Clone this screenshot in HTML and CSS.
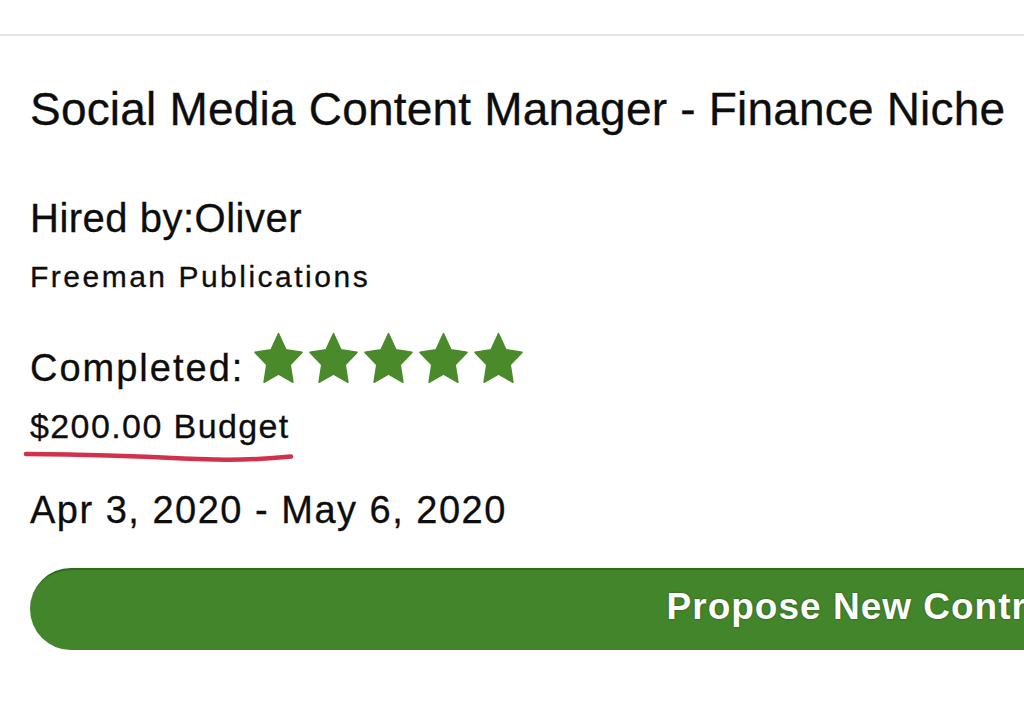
FILE: index.html
```html
<!DOCTYPE html>
<html lang="en">
<head>
<meta charset="utf-8">
<title>Contract</title>
<link rel="stylesheet" href="styles.css">
</head>
<body>
<div class="topbar"></div>
<main class="card">
  <h1 class="title">Social Media Content Manager - Finance Niche</h1>
  <div class="hired">Hired by:Oliver</div>
  <div class="company">Freeman Publications</div>
  <div class="completed-row">
    <span class="completed">Completed:</span>
    <div class="stars">
      <svg class="star" viewBox="2 2 20 19.3" preserveAspectRatio="none"><path d="M12 2.6l3 6.1 6.6 1-4.8 4.7 1.1 6.6L12 17.9l-5.9 3.1 1.1-6.6-4.8-4.7 6.6-1z"/></svg>
      <svg class="star" viewBox="2 2 20 19.3" preserveAspectRatio="none"><path d="M12 2.6l3 6.1 6.6 1-4.8 4.7 1.1 6.6L12 17.9l-5.9 3.1 1.1-6.6-4.8-4.7 6.6-1z"/></svg>
      <svg class="star" viewBox="2 2 20 19.3" preserveAspectRatio="none"><path d="M12 2.6l3 6.1 6.6 1-4.8 4.7 1.1 6.6L12 17.9l-5.9 3.1 1.1-6.6-4.8-4.7 6.6-1z"/></svg>
      <svg class="star" viewBox="2 2 20 19.3" preserveAspectRatio="none"><path d="M12 2.6l3 6.1 6.6 1-4.8 4.7 1.1 6.6L12 17.9l-5.9 3.1 1.1-6.6-4.8-4.7 6.6-1z"/></svg>
      <svg class="star" viewBox="2 2 20 19.3" preserveAspectRatio="none"><path d="M12 2.6l3 6.1 6.6 1-4.8 4.7 1.1 6.6L12 17.9l-5.9 3.1 1.1-6.6-4.8-4.7 6.6-1z"/></svg>
    </div>
  </div>
  <div class="budget">$200.00 Budget</div>
  <svg class="scribble" viewBox="0 0 272 16" width="272" height="16"><path d="M3 5 C 50 5.5, 110 7, 160 9.5 C 200 11.5, 240 10.5, 268 7.5"/></svg>
  <div class="dates">Apr 3, 2020 - May 6, 2020</div>
  <button class="propose">Propose New Contract</button>
</main>
</body>
</html>
```
FILE: styles.css
```css
html, body {
  margin: 0;
  padding: 0;
  background: #ffffff;
  overflow: hidden;
}
body {
  width: 1024px;
  height: 726px;
  font-family: "Liberation Sans", Arial, sans-serif;
  color: #0d0d0d;
}
.topbar {
  height: 34px;
  border-bottom: 2px solid #e3e3e3;
}
.card {
  padding-left: 30px;
  display: flex;
  flex-direction: column;
  align-items: flex-start;
  -webkit-text-stroke: 0.3px #0d0d0d;
}
.title {
  margin: 50px 0 0 0;
  font-size: 46px;
  font-weight: 400;
  line-height: 46px;
  letter-spacing: 0.2px;
  white-space: nowrap;
}
.hired {
  margin-top: 66px;
  font-size: 40px;
  line-height: 40px;
  letter-spacing: 0.5px;
}
.company {
  margin-top: 24px;
  font-size: 30px;
  line-height: 30px;
  letter-spacing: 2.5px;
}
.completed-row {
  margin-top: 40px;
  display: flex;
  align-items: flex-end;
}
.completed {
  font-size: 38px;
  line-height: 38px;
  letter-spacing: 2px;
}
.stars {
  display: flex;
  gap: 6px;
  margin: 0 0 4px 10px;
}
.star {
  width: 49px;
  height: 51px;
  fill: #4a8a2b;
  stroke: #4a8a2b;
  stroke-width: 0.6;
  stroke-linejoin: round;
}
.budget {
  margin-top: 22px;
  font-size: 34px;
  line-height: 34px;
  letter-spacing: 1.4px;
}
.scribble {
  margin: 6px 0 0 -7px;
  fill: none;
  stroke: #d2304c;
  stroke-width: 4.5;
  stroke-linecap: round;
}
.dates {
  margin-top: 26px;
  font-size: 38px;
  line-height: 38px;
  letter-spacing: 1.5px;
}
.propose {
  margin-top: 39px;
  width: 1690px;
  height: 82px;
  flex: none;
  border: none;
  border-top: 2px solid #2f6a1b;
  border-radius: 41px;
  background: #42852a;
  color: #ffffff;
  font-family: "Liberation Sans", Arial, sans-serif;
  font-size: 37px;
  font-weight: 700;
  letter-spacing: 1px;
  -webkit-text-stroke: 0;
  text-shadow: 0 0 2px rgba(0, 0, 0, 0.45);
  padding: 0 0 6px 0;
}
```
